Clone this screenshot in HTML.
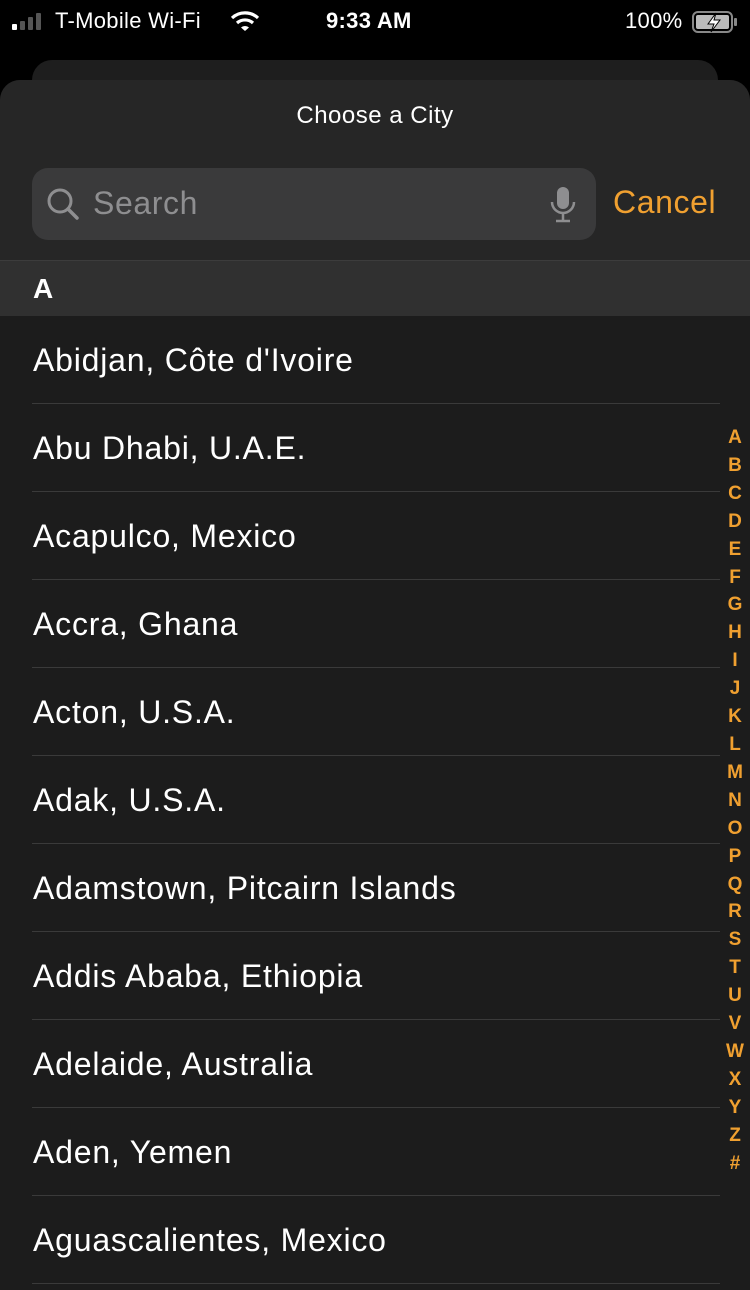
<!DOCTYPE html>
<html><head><meta charset="utf-8"><style>
*{margin:0;padding:0;box-sizing:border-box}
body{width:750px;height:1282px;background:#000;font-family:"Liberation Sans",sans-serif;color:#fff;position:relative;overflow:hidden}
.sb{position:absolute;top:0;left:0;width:750px;height:42px;font-size:22px;letter-spacing:0.3px}
.back{position:absolute;left:32px;top:60px;width:686px;height:60px;background:#1e1e1e;border-radius:20px}
.sheet{position:absolute;left:0;top:80px;width:750px;height:1210px;background:#1c1c1c;border-radius:20px 20px 0 0;overflow:hidden}
.head{height:181px;background:#262626;position:relative;border-bottom:1px solid #3c3c3c}
.title{position:absolute;top:22px;width:100%;text-align:center;font-size:24px;letter-spacing:0.5px}
.search{position:absolute;left:32px;top:88px;width:564px;height:72px;background:#3a3a3b;border-radius:16px}
.search span{position:absolute;left:61px;top:17px;font-size:32px;color:#8e8e90;letter-spacing:0.6px}
.cancel{position:absolute;left:613px;top:104px;font-size:32px;color:#f0a030;letter-spacing:0.6px}
.sec{height:55px;background:#303030;font-size:28px;font-weight:bold;padding:12px 0 0 33px}
.row{height:88px;position:relative;font-size:32px;letter-spacing:0.8px;padding:26px 0 0 33px}
.row:after{content:"";position:absolute;left:32px;right:30px;bottom:0;height:1px;background:#3a3a3a}
.idx{position:absolute;right:0px;top:424px;width:30px;text-align:center;color:#f0a030;font-size:19px;font-weight:bold;line-height:27.9px}
</style></head><body>
<div class="sb">
<svg style="position:absolute;left:12px;top:12px" width="36" height="18"><rect x="0" y="12" width="5" height="6" rx="1" fill="#fff"/><rect x="8" y="9" width="5" height="9" rx="1" fill="#555"/><rect x="16" y="5" width="5" height="13" rx="1" fill="#555"/><rect x="24" y="1" width="5" height="17" rx="1" fill="#555"/></svg>
<span style="position:absolute;left:55px;top:8px">T-Mobile Wi-Fi</span>
<svg style="position:absolute;left:230px;top:10px" width="30" height="22" viewBox="0 0 30 22"><path d="M2 8a19 19 0 0 1 26 0" stroke="#fff" stroke-width="3.2" fill="none"/><path d="M7 13a12 12 0 0 1 16 0" stroke="#fff" stroke-width="3.2" fill="none"/><path d="M11 17.5a6 6 0 0 1 8 0L15 21z" fill="#fff"/></svg>
<span style="position:absolute;left:326px;top:8px;font-weight:bold">9:33 AM</span>
<span style="position:absolute;left:625px;top:8px">100%</span>
<svg style="position:absolute;left:692px;top:11px" width="46" height="22"><rect x="1" y="1" width="39" height="20" rx="5" stroke="#888" stroke-width="2" fill="none"/><rect x="4" y="4" width="33" height="14" rx="2" fill="#bbb"/><rect x="42" y="7" width="3" height="8" rx="1" fill="#888"/><path d="M24 2l-8 11h6l-3 8 9-12h-6z" fill="#fff" stroke="#000" stroke-width="1"/></svg>
</div>
<div class="back"></div>
<div class="sheet">
<div class="head">
<div class="title">Choose a City</div>
<div class="search">
<svg style="position:absolute;left:14px;top:19px" width="34" height="34"><circle cx="14" cy="14" r="11" stroke="#8e8e90" stroke-width="3" fill="none"/><path d="M22 22l9 9" stroke="#8e8e90" stroke-width="3.5" stroke-linecap="round"/></svg>
<span>Search</span>
<svg style="position:absolute;left:516px;top:18px" width="30" height="38"><rect x="9" y="1" width="12" height="22" rx="6" fill="#8e8e90"/><path d="M4 16a11 11 0 0 0 22 0" stroke="#8e8e90" stroke-width="2.5" fill="none"/><path d="M15 27v7M8 35h14" stroke="#8e8e90" stroke-width="2.5"/></svg>
</div>
<div class="cancel">Cancel</div>
</div>
<div class="sec">A</div>
<div class="row">Abidjan, Côte d'Ivoire</div>
<div class="row">Abu Dhabi, U.A.E.</div>
<div class="row">Acapulco, Mexico</div>
<div class="row">Accra, Ghana</div>
<div class="row">Acton, U.S.A.</div>
<div class="row">Adak, U.S.A.</div>
<div class="row">Adamstown, Pitcairn Islands</div>
<div class="row">Addis Ababa, Ethiopia</div>
<div class="row">Adelaide, Australia</div>
<div class="row">Aden, Yemen</div>
<div class="row">Aguascalientes, Mexico</div>
</div>
<div class="idx">A<br>B<br>C<br>D<br>E<br>F<br>G<br>H<br>I<br>J<br>K<br>L<br>M<br>N<br>O<br>P<br>Q<br>R<br>S<br>T<br>U<br>V<br>W<br>X<br>Y<br>Z<br>#</div>
</body></html>
